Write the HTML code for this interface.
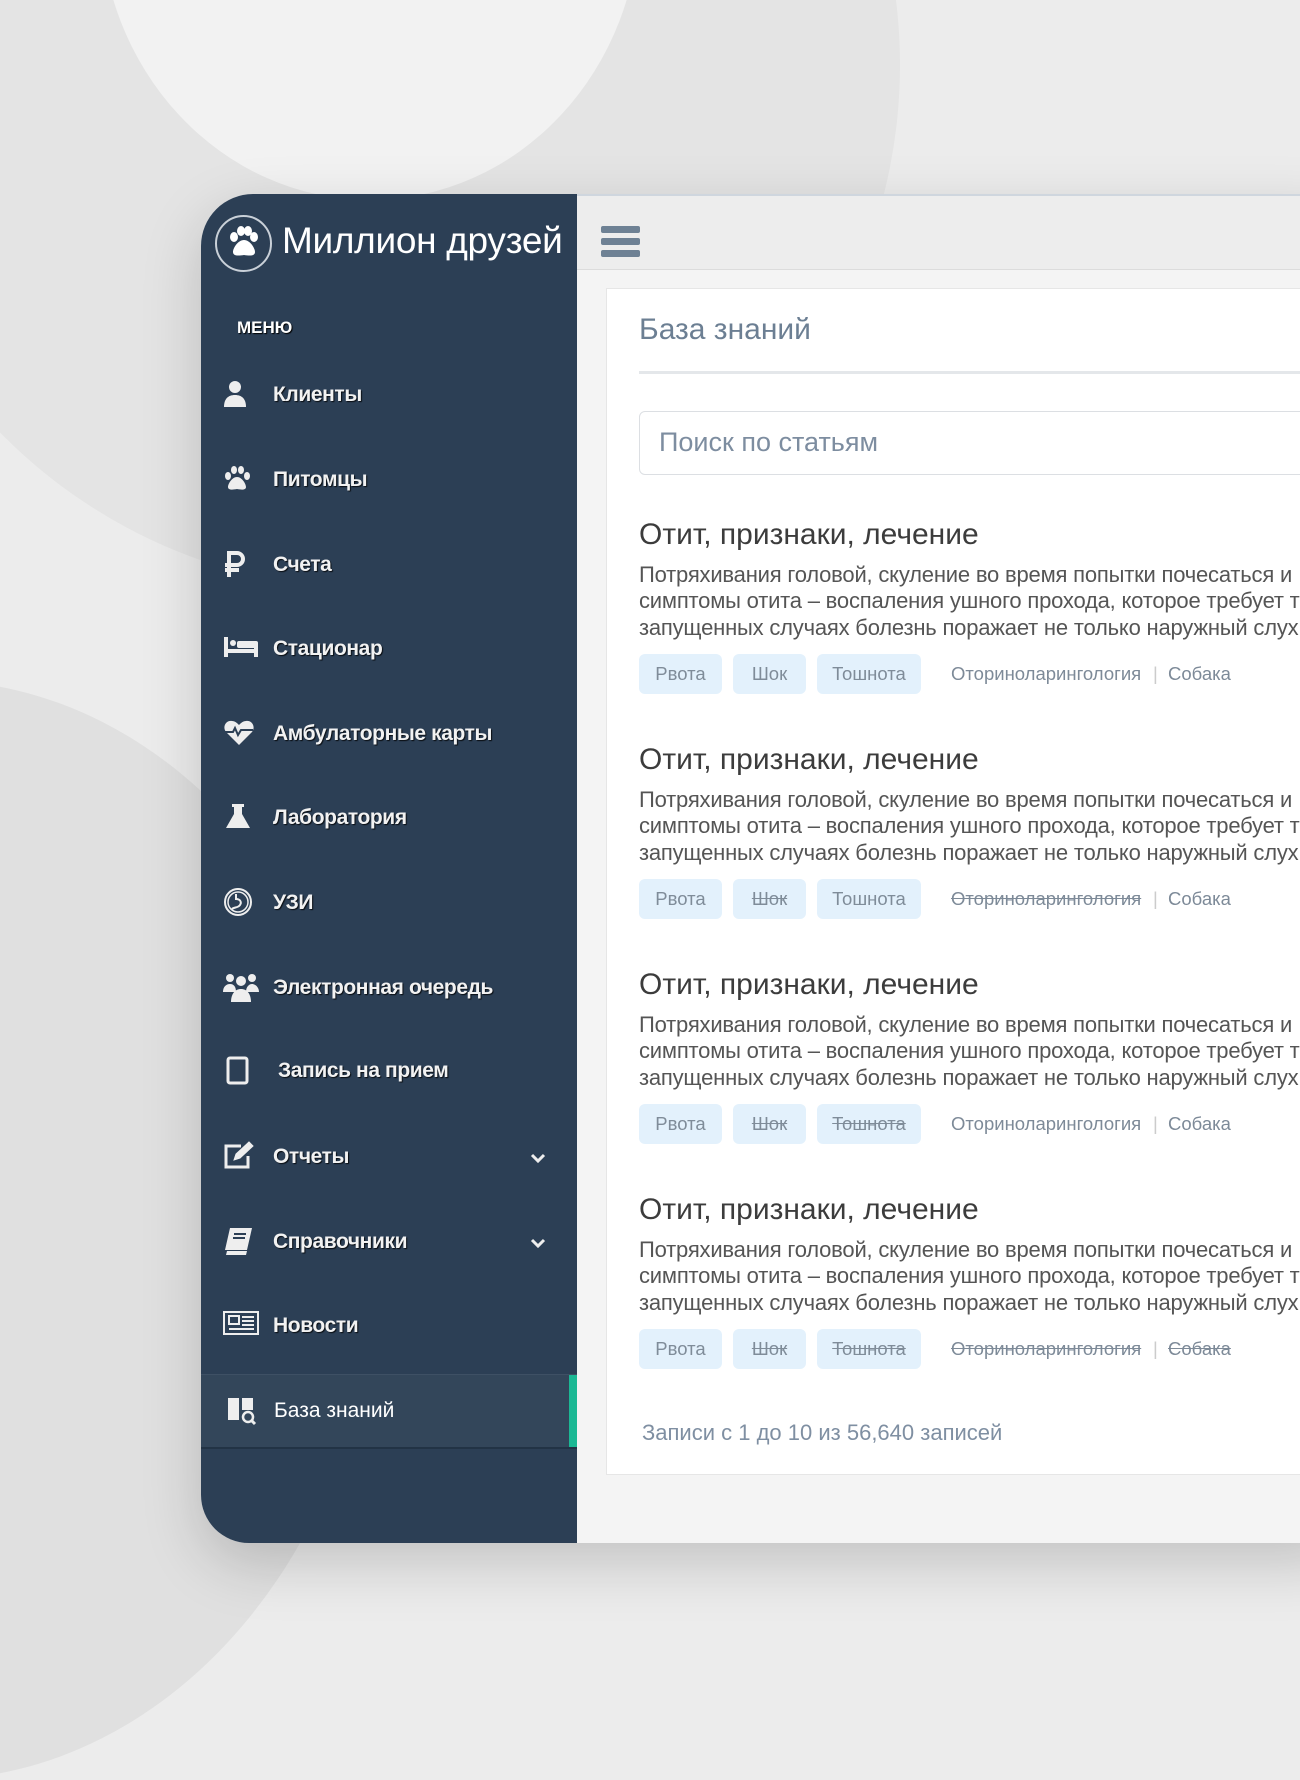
<!DOCTYPE html>
<html><head><meta charset="utf-8"><style>
*{margin:0;padding:0;box-sizing:border-box}
body{width:1300px;height:1720px;overflow:hidden;background:#ececec;font-family:"Liberation Sans",Arial,sans-serif;position:relative}
.c{position:absolute;border-radius:50%}
.win{position:absolute;left:201px;top:194px;width:1140px;height:1349px;border-radius:52px 0 0 48px;overflow:hidden;box-shadow:0 20px 60px rgba(0,0,0,.18);background:#f4f4f4}
.side{position:absolute;left:0;top:0;width:376px;height:100%;background:#2c3f55}
.logo{position:absolute;left:14px;top:21px;width:57px;height:57px;border:2px solid #c9d0d8;border-radius:50%}
.brand{position:absolute;left:81px;top:26px;color:#fff;font-size:37px;letter-spacing:-.3px}
.menu{position:absolute;left:36px;top:124px;color:#fff;font-weight:bold;font-size:17px;text-shadow:1px 1px 1px #000}
.it{position:absolute;left:0;width:376px;height:40px;color:#f2f2f2;font-weight:bold;font-size:21px;letter-spacing:-.4px;text-shadow:1px 1px 1px rgba(0,0,0,.8)}
.it svg{position:absolute;left:22px;top:4px}
.it span{position:absolute;left:72px;top:8px}
.it .chev{position:absolute;left:328px;top:12px}
.act{position:absolute;left:0;top:1180px;width:376px;height:75px;background:#33465a;border-top:1px solid #3e5064;border-bottom:2px solid #223345}
.act .bar{position:absolute;right:0;top:0;width:8px;height:100%;background:#1bb894}
.top{position:absolute;left:376px;top:0;right:0;height:76px;background:#ededed;border-bottom:1px solid #dcdcdc;border-top:2px solid #cfd6de}
.card{position:absolute;left:405px;top:94px;right:0;height:1187px;background:#fff;border:1px solid #e6e6e6}
.h{position:absolute;left:32px;top:24px;font-size:30px;color:#6c7f93}
.hl{position:absolute;left:32px;top:82px;right:0;height:3px;background:#e4e7ea}
.search{position:absolute;left:32px;top:122px;right:-10px;height:64px;border:1px solid #dcdfe3;border-radius:6px;font-size:27px;color:#7d8da0;padding:15px 0 0 19px}
.art{position:absolute;left:32px;width:900px}
.art h2{font-weight:normal;font-size:30px;line-height:36px;color:#3c3c3c;white-space:nowrap;height:36px}
.art p{font-size:22px;line-height:26.3px;color:#555;white-space:nowrap;margin-top:9px;width:900px;overflow:hidden;letter-spacing:-.2px}
.tags{position:relative;height:40px;margin-top:13px;font-size:18.5px;color:#7d8a98}
.tg{position:absolute;top:0;height:40px;background:#e3f1fc;border-radius:6px;text-align:center;line-height:39px;color:#7f8c99}
.s{text-decoration:line-through}
.cat{position:absolute;top:9px}
.foot{position:absolute;left:35px;top:1131px;font-size:22px;color:#7f8fa2}
</style></head><body>
<div class="c" style="left:-150px;top:-460px;width:1050px;height:1050px;background:#e4e4e4"></div>
<div class="c" style="left:100px;top:-380px;width:540px;height:580px;background:#f2f2f2"></div>
<div class="c" style="left:-520px;top:680px;width:900px;height:1100px;background:#e0e0e0"></div>
<div class="win">
<div class="side">
 <div class="logo"><svg width="53" height="53" viewBox="0 0 53 53"><g fill="#fff"><ellipse cx="17" cy="20" rx="4" ry="5"/><ellipse cx="24" cy="14" rx="4" ry="5"/><ellipse cx="31" cy="14" rx="4" ry="5"/><ellipse cx="37" cy="20" rx="4" ry="5"/><path d="M27 23c-6 0-11 8-11 12 0 4 5 4 11 3 6 1 11 1 11-3 0-4-5-12-11-12z"/></g></svg></div>
 <div class="brand">Миллион друзей</div>
 <div class="menu">МЕНЮ</div>
 <div class="it" style="top:181px"><svg width="30" height="30" viewBox="0 0 30 30" fill="#eee"><circle cx="12" cy="8" r="6"/><path d="M1 28c0-8 4-12 11-12s11 4 11 12z"/></svg><span>Клиенты</span></div>
 <div class="it" style="top:266px"><svg width="30" height="30" viewBox="0 0 30 30" fill="#eee"><ellipse cx="5" cy="12" rx="3" ry="4"/><ellipse cx="11" cy="6" rx="3" ry="4"/><ellipse cx="18" cy="6" rx="3" ry="4"/><ellipse cx="24" cy="12" rx="3" ry="4"/><path d="M14 13c-5 0-9 7-9 10s4 3 9 2c5 1 9 1 9-2s-4-10-9-10z"/></svg><span>Питомцы</span></div>
 <div class="it" style="top:351px"><svg width="30" height="30" viewBox="0 0 30 30" fill="none" stroke="#eee" stroke-width="4"><path d="M6 28V4h8a6 6 0 010 12H2M2 21h14"/></svg><span>Счета</span></div>
 <div class="it" style="top:435px"><svg width="36" height="30" viewBox="0 0 36 30" fill="#eee"><rect x="1" y="4" width="4" height="20"/><rect x="1" y="16" width="34" height="4"/><rect x="31" y="12" width="4" height="12"/><circle cx="10" cy="10" r="3"/><rect x="14" y="8" width="21" height="7" rx="2"/></svg><span>Стационар</span></div>
 <div class="it" style="top:520px"><svg width="32" height="30" viewBox="0 0 32 30" fill="#eee"><path d="M16 27L3 14C-1 9 3 2 9 3c3 0 5 2 7 4 2-2 4-4 7-4 6-1 10 6 6 11z"/><path d="M2 14h8l2-4 3 7 3-5h12" stroke="#2c3f55" stroke-width="2" fill="none"/></svg><span>Амбулаторные карты</span></div>
 <div class="it" style="top:604px"><svg width="30" height="30" viewBox="0 0 30 30" fill="#eee"><rect x="9" y="2" width="12" height="3"/><path d="M11 5h8v7l8 14H3l8-14z"/></svg><span>Лаборатория</span></div>
 <div class="it" style="top:689px"><svg width="32" height="32" viewBox="0 0 32 32" fill="none" stroke="#eee" stroke-width="2"><circle cx="15" cy="15" r="13"/><circle cx="15" cy="15" r="10" stroke-width="1.5"/><path d="M13 7v5c4 0 6 3 4 6-2 3-6 2-8 4"/></svg><span>УЗИ</span></div>
 <div class="it" style="top:774px"><svg width="36" height="32" viewBox="0 0 36 32" fill="#eee"><circle cx="7" cy="6" r="4"/><circle cx="29" cy="6" r="4"/><circle cx="18" cy="9" r="5"/><path d="M0 20c0-5 3-8 7-8s6 3 6 8zM23 20c0-5 3-8 6-8s7 3 7 8z"/><path d="M8 30c0-8 4-13 10-13s10 5 10 13z"/></svg><span>Электронная очередь</span></div>
 <div class="it" style="top:857px"><svg width="30" height="30" viewBox="0 0 30 30" fill="none" stroke="#eee" stroke-width="3"><rect x="5" y="3" width="19" height="25" rx="2"/></svg><span style="left:77px">Запись на прием</span></div>
 <div class="it" style="top:943px"><svg width="32" height="30" viewBox="0 0 32 30" fill="none" stroke="#eee" stroke-width="3"><path d="M18 5H3v21h22V15"/><path d="M11 19l2-6 13-12 4 4-13 12z" fill="#eee" stroke-width="1"/></svg><span>Отчеты</span><svg class="chev" width="18" height="18" viewBox="0 0 18 18"><path d="M3 6l6 6 6-6" stroke="#eee" stroke-width="3" fill="none"/></svg></div>
 <div class="it" style="top:1028px"><svg width="32" height="30" viewBox="0 0 32 30" fill="#eee"><path d="M7 2h22l-5 22H2zM4 25h20l-1 4H3z"/><path d="M11 8h12M10 12h12" stroke="#2c3f55" stroke-width="2"/></svg><span>Справочники</span><svg class="chev" width="18" height="18" viewBox="0 0 18 18"><path d="M3 6l6 6 6-6" stroke="#eee" stroke-width="3" fill="none"/></svg></div>
 <div class="it" style="top:1112px"><svg width="36" height="30" viewBox="0 0 36 30" fill="none" stroke="#eee" stroke-width="2"><rect x="1" y="2" width="34" height="22"/><rect x="6" y="6" width="10" height="8"/><path d="M19 7h12M19 11h12M19 15h12M6 19h25"/></svg><span>Новости</span></div>
 <div class="act"><div class="bar"></div></div>
 <div class="it" style="top:1197px"><svg width="32" height="32" viewBox="0 0 32 32" fill="#eee" style="left:26px"><path d="M1 3h11v22H1zM15 3h11v12h-11z"/><circle cx="21" cy="22" r="5" fill="none" stroke="#eee" stroke-width="2.5"/><path d="M24 25l4 4" stroke="#eee" stroke-width="3"/></svg><span style="left:73px;font-weight:normal;letter-spacing:0;text-shadow:none;color:#fff">База знаний</span></div>
</div>
<div class="top"><svg style="position:absolute;left:24px;top:30px" width="39" height="34" viewBox="0 0 39 34"><rect y="0" width="39" height="7" rx="2" fill="#6e8194"/><rect y="12" width="39" height="7" rx="2" fill="#6e8194"/><rect y="24" width="39" height="7" rx="2" fill="#6e8194"/></svg></div>
<div class="card">
 <div class="h">База знаний</div><div class="hl"></div>
 <div class="search">Поиск по статьям</div>
 <div class="art" style="top:228px"><h2>Отит, признаки, лечение</h2><p>Потряхивания головой, скуление во время попытки почесаться и<br>симптомы отита – воспаления ушного прохода, которое требует т<br>запущенных случаях болезнь поражает не только наружный слух</p>
 <div class="tags"><div class="tg" style="left:0;width:83px">Рвота</div><div class="tg" style="left:94px;width:73px">Шок</div><div class="tg" style="left:178px;width:104px">Тошнота</div><span class="cat" style="left:312px">Оториноларингология</span><span class="cat" style="left:514px;color:#ccc">|</span><span class="cat" style="left:529px">Собака</span></div></div>
 <div class="art" style="top:453px"><h2>Отит, признаки, лечение</h2><p>Потряхивания головой, скуление во время попытки почесаться и<br>симптомы отита – воспаления ушного прохода, которое требует т<br>запущенных случаях болезнь поражает не только наружный слух</p>
 <div class="tags"><div class="tg" style="left:0;width:83px">Рвота</div><div class="tg s" style="left:94px;width:73px">Шок</div><div class="tg" style="left:178px;width:104px">Тошнота</div><span class="cat s" style="left:312px">Оториноларингология</span><span class="cat" style="left:514px;color:#ccc">|</span><span class="cat" style="left:529px">Собака</span></div></div>
 <div class="art" style="top:678px"><h2>Отит, признаки, лечение</h2><p>Потряхивания головой, скуление во время попытки почесаться и<br>симптомы отита – воспаления ушного прохода, которое требует т<br>запущенных случаях болезнь поражает не только наружный слух</p>
 <div class="tags"><div class="tg" style="left:0;width:83px">Рвота</div><div class="tg s" style="left:94px;width:73px">Шок</div><div class="tg s" style="left:178px;width:104px">Тошнота</div><span class="cat" style="left:312px">Оториноларингология</span><span class="cat" style="left:514px;color:#ccc">|</span><span class="cat" style="left:529px">Собака</span></div></div>
 <div class="art" style="top:903px"><h2>Отит, признаки, лечение</h2><p>Потряхивания головой, скуление во время попытки почесаться и<br>симптомы отита – воспаления ушного прохода, которое требует т<br>запущенных случаях болезнь поражает не только наружный слух</p>
 <div class="tags"><div class="tg" style="left:0;width:83px">Рвота</div><div class="tg s" style="left:94px;width:73px">Шок</div><div class="tg s" style="left:178px;width:104px">Тошнота</div><span class="cat s" style="left:312px">Оториноларингология</span><span class="cat" style="left:514px;color:#ccc">|</span><span class="cat s" style="left:529px">Собака</span></div></div>
 <div class="foot">Записи с 1 до 10 из 56,640 записей</div>
</div>
</div>
</body></html>
